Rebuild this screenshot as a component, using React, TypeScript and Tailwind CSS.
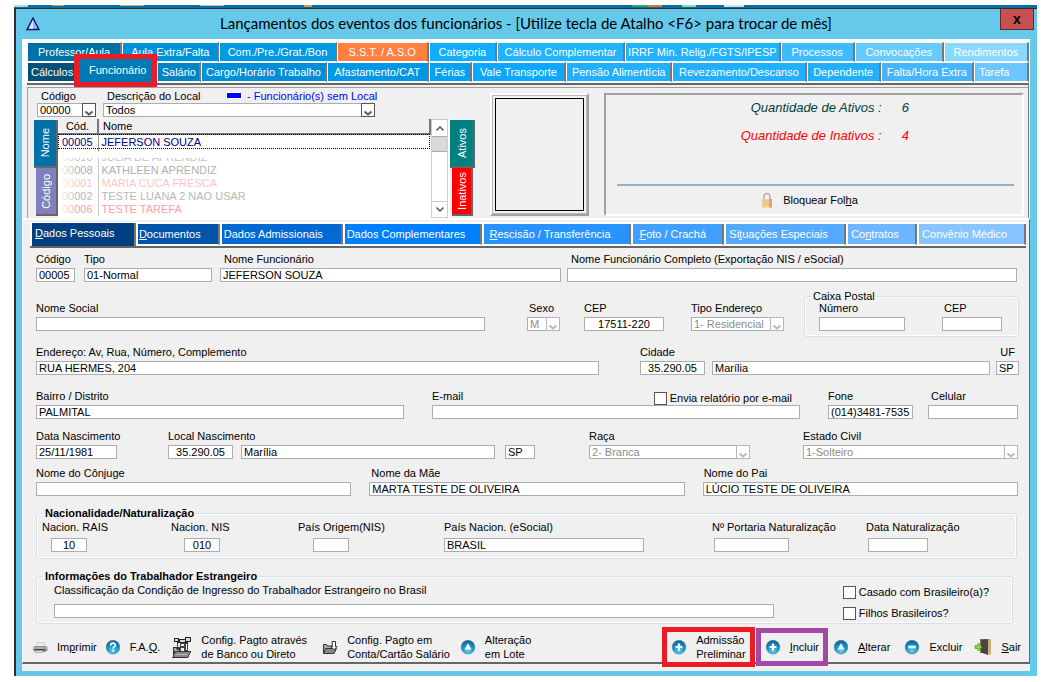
import React, { useId } from 'react';
import { clsx } from 'clsx';

const topTabs = [
    { label: 'Professor/Aula', color: 'bg-[#0070a6]' },
    { label: 'Aula Extra/Falta', color: 'bg-[#0093dc]' },
    { label: 'Com./Pre./Grat./Bon', color: 'bg-[#0099e3]' },
    { label: 'S.S.T. / A.S.O', color: 'bg-[#ff8040]' },
    { label: 'Categoria', color: 'bg-[#12adff]' },
    { label: 'Cálculo Complementar', color: 'bg-[#20b3ff]' },
    { label: 'IRRF Min. Relig./FGTS/IPESP', color: 'bg-[#20b3ff]' },
    { label: 'Processos', color: 'bg-[#3cbcff]' },
    { label: 'Convocações', color: 'bg-[#66ccff]' },
    { label: 'Rendimentos', color: 'bg-[#88d8ff]' },
];

const mainTabs = [
    { label: 'Cálculos', color: 'bg-[#005078]' },
    { label: 'Funcionário', color: 'bg-[#007ab5]', active: true },
    { label: 'Salário', color: 'bg-[#0084c4]' },
    { label: 'Cargo/Horário Trabalho', color: 'bg-[#008ed6]' },
    { label: 'Afastamento/CAT', color: 'bg-[#0098e4]' },
    { label: 'Férias', color: 'bg-[#00a2f6]' },
    { label: 'Vale Transporte', color: 'bg-[#0ca8ff]' },
    { label: 'Pensão Alimentícia', color: 'bg-[#20b0ff]' },
    { label: 'Revezamento/Descanso', color: 'bg-[#20b0ff]' },
    { label: 'Dependente', color: 'bg-[#20b0ff]' },
    { label: 'Falta/Hora Extra', color: 'bg-[#45b5ff]' },
    { label: 'Tarefa', color: 'bg-[#6cc6ff] pl-1 text-left' },
];

const detailTabs = [
    { before: '', key: 'D', after: 'ados Pessoais', color: 'bg-[#004080] pl-[3px]', active: true },
    { before: '', key: 'D', after: 'ocumentos', color: 'bg-[#0055aa] pl-px' },
    { before: 'Dados Admissionais', key: '', after: '', color: 'bg-[#0069d4] pl-0.5' },
    { before: 'Dados Complementares', key: '', after: '', color: 'bg-[#007fff] pl-0.5' },
    { before: '', key: 'R', after: 'escisão / Transferência', color: 'bg-[#2892ff] pl-1.5' },
    { before: '', key: 'F', after: 'oto / Crachá', color: 'bg-[#409fff] pl-1.5' },
    { before: 'Si', key: 't', after: 'uações Especiais', color: 'bg-[#55a9ff] pl-[3px]' },
    { before: 'Co', key: 'n', after: 'tratos', color: 'bg-[#6cb6ff] pl-[3px]' },
    { before: 'Convênio Médico', key: '', after: '', color: 'bg-[#88c4ff] pl-[3px]' },
];

const employees = [
    { code: '00010', name: 'JULIA DE APRENDIZ', color: 'text-[#c4c4c4]' },
    { code: '00008', name: 'KATHLEEN APRENDIZ', color: 'text-[#b0b0b0]' },
    { code: '00001', name: 'MARIA CUCA FRESCA', color: 'text-[#ffc4c4]' },
    { code: '00002', name: 'TESTE LUANA 2 NAO USAR', color: 'text-[#b8b8b8]' },
    { code: '00006', name: 'TESTE TAREFA', color: 'text-[#ffa0a0]' },
];

interface FieldProps {
    label: string;
    value?: string;
    className?: string;
    labelClass?: string;
    inputClass?: string;
}

const boxClass = 'block h-3.5 w-full min-w-0 rounded-none border border-[#abadb3] bg-white px-0.5 text-[11px] leading-3 outline-none';

const Field: React.FC<FieldProps> = ({ label, value = '', className, labelClass, inputClass }) => {
    const id = useId();
    return (
        <div className={clsx('flex min-w-0 flex-col gap-0.5', className)}>
            <label htmlFor={id} className={clsx('leading-[14px] whitespace-nowrap', labelClass)}>{label}</label>
            <input id={id} defaultValue={value} className={clsx(boxClass, inputClass)} />
        </div>
    );
};

const Box: React.FC<FieldProps> = ({ label, value = '', className }) => (
    <div className={clsx('min-w-0', className)}>
        <input aria-label={label} defaultValue={value} className={boxClass} />
    </div>
);

interface DropProps {
    id: string;
    value: string;
    muted?: boolean;
    className?: string;
}

const Drop: React.FC<DropProps> = ({ id, value, muted, className }) => (
    <div className={clsx('relative', className)}>
        <select
            id={id}
            disabled={muted}
            className={clsx(
                'block h-3.5 w-full appearance-none rounded-none border border-[#abadb3] bg-white px-0.5 text-[11px] leading-3 opacity-100',
                muted ? 'text-[#8c8c8c]' : 'text-black',
            )}
        >
            <option>{value}</option>
        </select>
        <svg
            viewBox="0 0 14 14"
            fill="none"
            stroke="currentColor"
            className={clsx('pointer-events-none absolute top-0 right-0 size-3.5', muted ? 'text-[#b4b6bc]' : 'text-[#555]')}
        >
            <rect x="0.5" y="0.5" width="13" height="13" fill="#fff" />
            <path d="M3.5 8.5 7 11.5 10.5 8.5" strokeWidth="2" />
        </svg>
    </div>
);

const SelectField: React.FC<{ label: string; value: string; className?: string; labelClass?: string }> = ({ label, value, className, labelClass }) => {
    const id = useId();
    return (
        <div className={clsx('flex flex-col gap-0.5', className)}>
            <label htmlFor={id} className={clsx('leading-[14px] whitespace-nowrap', labelClass)}>{label}</label>
            <Drop id={id} value={value} muted />
        </div>
    );
};

const Check: React.FC<{ label: string }> = ({ label }) => (
    <label className="flex items-center gap-[3px] leading-[14px] whitespace-nowrap">
        <input type="checkbox" className="size-[13px] appearance-none border border-[#555] bg-white checked:bg-[#0078d7]" />
        {label}
    </label>
);

const RoundIcon: React.FC<{ kind: 'plus' | 'minus' | 'up' | 'help' }> = ({ kind }) => {
    const id = useId();
    return (
        <svg viewBox="0 0 16 16" className="size-4 shrink-0">
            <defs>
                <radialGradient id={id} cx="50%" cy="80%" r="75%">
                    <stop offset="0" stopColor="#55d3f2" />
                    <stop offset="0.55" stopColor="#1a98cb" />
                    <stop offset="1" stopColor="#12608f" />
                </radialGradient>
            </defs>
            <circle cx="8" cy="8.5" r="7.3" fill="#c3ccd1" />
            <circle cx="8" cy="8" r="6.7" fill={`url(#${id})`} stroke="#3c86a8" strokeWidth="0.6" />
            {kind === 'plus' && <path d="M8 4.6v6.8M4.6 8h6.8" stroke="#fff" strokeWidth="2.2" />}
            {kind === 'minus' && <path d="M4.2 8h7.6" stroke="#fff" strokeWidth="2.6" />}
            {kind === 'up' && <path d="M8 4.2 11.4 10.4H4.6Z" fill="#fff" />}
            {kind === 'help' && (
                <>
                    <path d="M5.7 6.4C5.7 3.2 10.5 3.4 10.4 6.2 10.3 7.6 8.1 7.9 8.1 9.6" fill="none" stroke="#fff" strokeWidth="1.7" />
                    <rect x="7.2" y="10.7" width="1.8" height="1.8" fill="#fff" />
                </>
            )}
        </svg>
    );
};

const PrinterIcon = () => (
    <svg viewBox="0 0 16 16" className="size-4 shrink-0">
        <path d="M5 3.5h7l1 4H4Z" fill="#e9ecee" stroke="#b5b9bc" strokeWidth="0.6" />
        <path d="M3 7h11l1.5 1.5v3L13 13H3l-2-2V8.5Z" fill="#8b8f92" />
        <path d="M1 8h14v2H1Z" fill="#a9adb0" />
        <path d="M3 10h10v1.5H3Z" fill="#3e4346" />
        <path d="M2.5 11.5h9l-1 2h-7Z" fill="#dfe2e3" stroke="#777" strokeWidth="0.5" />
        <rect x="12.5" y="8.5" width="1.5" height="1" fill="#5bbf4a" />
    </svg>
);

// vault with its door open, resting on a folder
const BankIcon = () => (
    <svg viewBox="0 0 20 22" className="h-[22px] w-5 shrink-0" shapeRendering="crispEdges">
        <path d="M2 2h5v1h6V1h6v5h-3v2H5V6H2Z" fill="#222" />
        <path d="M3 3h3v2H3ZM14 2h4v3h-4ZM8 4h5v2H8Z" fill="#d8d8d8" />
        <path d="M5 7h11v9H5Z" fill="#444" />
        <path d="M6 7h2v4H6ZM9 8h3v2H9ZM9 12h3v4H9ZM14 8h1v6h-1Z" fill="#f2f2f2" />
        <path d="M1 11h3l1 2h2v8H1Z" fill="#aaa" stroke="#333" />
        <path d="M3 15h16l-3 6H1Z" fill="#888" stroke="#333" />
        <path d="M4 18h12" stroke="#b5b5b5" />
    </svg>
);

const FolderIcon = () => (
    <svg viewBox="0 0 16 16" className="size-4 shrink-0" stroke="#333" strokeWidth="1">
        <path d="M1.5 5.5h3l1 1.5h6v7h-10Z" fill="#aaa" />
        <path d="M3.5 9.5h11L12 14.5H1.5Z" fill="#888" />
        <path d="M10 2.5h3.5v5H15l-3 3.5-3-3.5h1.5Z" fill="#fff" />
    </svg>
);

const ExitIcon = () => (
    <svg viewBox="0 0 18 18" className="size-[18px] shrink-0">
        <path d="M6 1h10v14H6Z" fill="#8a6f50" />
        <path d="M7 2 14 1v16L7 14.5Z" fill="#4b463f" />
        <path d="M14 1h3v15.5h-3Z" fill="#c9ad7c" />
        <path d="M1 7.5h3V5l4 4-4 4v-2.5H1Z" fill="#8fce3c" stroke="#4d8d1b" strokeWidth="0.6" />
    </svg>
);

const LockIcon = () => (
    <svg viewBox="0 0 12 16" className="h-4 w-3">
        <path d="M3 8V4.5a3 3 0 0 1 6 0V8" fill="none" stroke="#b3b3b3" strokeWidth="1.6" />
        <rect x="1" y="7" width="10" height="8.5" fill="#f3cf95" />
        <rect x="8" y="7" width="3" height="8.5" fill="#d6a868" />
        <path d="M1 9.5h10M1 12h10" stroke="#e2b877" strokeWidth="0.7" />
    </svg>
);

const ToolButton: React.FC<{ icon: React.ReactNode; className?: string; children: React.ReactNode }> = ({ icon, className, children }) => (
    <button type="button" className={clsx('flex shrink-0 items-center gap-[9px] text-left leading-[14px] whitespace-nowrap', className)}>
        {icon}
        <span>{children}</span>
    </button>
);

const SideTab: React.FC<{ label: string; className: string }> = ({ label, className }) => (
    <button
        type="button"
        className={clsx('flex flex-1 items-center justify-center border-r-2 border-b-2 border-[#666] text-white', className)}
    >
        <span className="rotate-180 [writing-mode:vertical-rl]">{label}</span>
    </button>
);

const TabStrips = () => (
    <div className="bg-white pt-[3px] pr-px pl-[5px] text-white">
        <div className="grid grid-cols-[95fr_97fr_117fr_92fr_68fr_128fr_155fr_74fr_89fr_85fr]">
            {topTabs.map((tab) => (
                <button
                    key={tab.label}
                    type="button"
                    className={clsx('h-5 min-w-0 border-t border-r-2 border-b border-l border-white border-r-[#777] whitespace-nowrap', tab.color)}
                >
                    {tab.label}
                </button>
            ))}
        </div>
        <div className="grid grid-cols-[51fr_79fr_44fr_125fr_102fr_43fr_94fr_106fr_134fr_74fr_93fr_55fr]">
            {mainTabs.map((tab) =>
                tab.active ? (
                    <button key={tab.label} type="button" className={clsx('relative z-10 -mt-[3px] min-w-0 pb-0.5', tab.color)}>
                        {tab.label}
                        <span className="absolute -inset-y-[5px] right-0 -left-1 border-[5px] border-[#ed1c24]" />
                    </button>
                ) : (
                    <button
                        key={tab.label}
                        type="button"
                        className={clsx('h-5 min-w-0 border-t border-r-2 border-b border-l border-white border-r-[#777] whitespace-nowrap', tab.color)}
                    >
                        {tab.label}
                    </button>
                ),
            )}
        </div>
        <div className="mt-px h-0.5 bg-[#666]" />
    </div>
);

const EmployeeList = () => (
    <div className="flex h-[99px] items-stretch">
        <div className="flex w-6 flex-col pt-px pb-0.5">
            <SideTab label="Nome" className="bg-[#0070a8]" />
            <SideTab label="Código" className="ml-0.5 bg-[#8080c0]" />
        </div>
        <div className="relative min-w-0 flex-1 overflow-hidden bg-white">
            <table className="w-full table-fixed border-collapse text-left">
                <thead>
                    <tr className="h-[15px] bg-[#f0f0f0] leading-[13px]">
                        <th className="w-10 border-r-2 border-b-2 border-[#777] text-center font-normal">Cód.</th>
                        <th className="border-r-2 border-b-2 border-[#777] pl-1 font-normal">Nome</th>
                    </tr>
                </thead>
                <tbody>
                    <tr className="h-[15px] leading-[13px] text-[#000080] outline-1 -outline-offset-1 outline-black outline-dotted">
                        <td className="border-r border-[#999] pl-1">00005</td>
                        <td className="pl-[3px]">JEFERSON SOUZA</td>
                    </tr>
                    <tr className="h-0.5"><td className="border-r border-[#999]" /><td /></tr>
                    {employees.map((row) => (
                        <tr key={row.code} className={clsx('h-[13px] leading-[13px]', row.color)}>
                            <td className="border-r border-[#ccc] pl-1">{row.code}</td>
                            <td className="pl-[3px]">{row.name}</td>
                        </tr>
                    ))}
                </tbody>
            </table>
            <div className="absolute top-[33px] left-0 h-1.5 w-full bg-white" />
            <div className="absolute top-[33px] left-0 h-16 w-4 bg-gradient-to-r from-white to-white/20" />
        </div>
        <div className="flex w-[17px] flex-col border border-[#ccc] bg-white">
            <button type="button" aria-label="Subir" className="flex h-4 items-center justify-center">
                <svg viewBox="0 0 8 5" className="h-[5px] w-2" fill="none" stroke="#555" strokeWidth="1.5"><path d="M0.5 4.5 4 1 7.5 4.5" /></svg>
            </button>
            <div className="h-4 border-y border-[#aaa] bg-[#dadada]" />
            <div className="flex-1" />
            <button type="button" aria-label="Descer" className="flex h-4 items-center justify-center border-t border-[#ccc]">
                <svg viewBox="0 0 8 5" className="h-[5px] w-2" fill="none" stroke="#555" strokeWidth="1.5"><path d="M0.5 0.5 4 4 7.5 0.5" /></svg>
            </button>
        </div>
        <div className="flex w-[27px] flex-col border-l-2 border-white pt-px pb-0.5">
            <SideTab label="Ativos" className="bg-[#008080]" />
            <SideTab label="Inativos" className="mr-0.5 ml-0.5 bg-[#ff0000]" />
        </div>
    </div>
);

const Summary = () => (
    <div className="flex h-[131px] border-t border-l border-[#a0a0a0] pr-1">
        <div className="flex w-[447px] shrink-0 flex-col pl-1.5">
            <div className="flex h-[15px] items-center">
                <label htmlFor="localCodigo" className="w-[66px] pl-[7px]">Código</label>
                <label htmlFor="localDescricao" className="w-[126px] pl-[7px] whitespace-nowrap">Descrição do Local</label>
                <span className="mr-[5px] h-[7px] w-4 shrink-0 border border-white bg-[#0000ff]" />
                <span className="whitespace-nowrap text-[#0000ff]">- Funcionário(s) sem Local</span>
            </div>
            <div className="flex gap-[7px] pb-0.5 pl-[3px]">
                <Drop id="localCodigo" value="00000" className="w-[59px]" />
                <Drop id="localDescricao" value="Todos" className="w-[272px]" />
            </div>
            <EmployeeList />
        </div>
        <div className="mt-[5px] mr-[15px] mb-0.5 ml-[15px] w-[99px] shrink-0 border-2 border-white border-r-[#a0a0a0] border-b-[#a0a0a0] p-[3px] outline-1 -outline-offset-3 outline-[#b8b8b8]">
            <div className="h-full border border-black" />
        </div>
        <div className="mt-[5px] mb-0.5 flex min-w-0 flex-1 flex-col border-2 border-white border-t-[#a0a0a0] border-l-[#a0a0a0] pr-2 pl-[11px]">
            <dl className="mt-1 grid grid-cols-[264fr_112fr] gap-x-5 gap-y-2.5 text-[13px] leading-[18px] italic">
                <dt className="text-right text-[#004040]">Quantidade de Ativos :</dt>
                <dd className="text-[#004040]">6</dd>
                <dt className="text-right text-[#ff0000]">Quantidade de Inativos :</dt>
                <dd className="text-[#ff0000]">4</dd>
            </dl>
            <hr className="mt-auto border-t-2 border-[#93adc4]" />
            <button type="button" className="mx-auto mt-1.5 mb-1.5 flex items-center gap-2.5 pr-3">
                <LockIcon />
                <span>Bloquear Fol<u>h</u>a</span>
            </button>
        </div>
    </div>
);

const DetailTabs = () => (
    <div className="mr-[3px] ml-[7px] border-b-2 border-[#666] bg-white pt-0.5 text-white">
        <div className="grid grid-cols-[106fr_84fr_123fr_139fr_150fr_93fr_122fr_71fr_109fr]">
            {detailTabs.map((tab) => (
                <button
                    key={tab.before + tab.key + tab.after}
                    type="button"
                    className={clsx(
                        'min-w-0 border-r-2 border-l-2 border-white border-r-[#777] text-left whitespace-nowrap',
                        tab.active ? '-mt-px h-[23px] pb-1' : 'h-[21px] border-b border-b-white',
                        tab.color,
                    )}
                >
                    {tab.before}
                    {tab.key && <u>{tab.key}</u>}
                    {tab.after}
                </button>
            ))}
        </div>
    </div>
);

const PersonalData = () => (
    <form className="flex flex-col pt-1 pr-2.5 pl-[13px]">
        <div className="flex pr-0.5">
            <Field label="Código" value="00005" className="w-[39px]" />
            <Field label="Tipo" value="01-Normal" className="ml-[9px] w-32" />
            <Field label="Nome Funcionário" value="JEFERSON SOUZA" className="ml-2 flex-[341]" labelClass="pl-1" />
            <Field label="Nome Funcionário Completo (Exportação NIS / eSocial)" className="ml-1.5 flex-[450]" labelClass="pl-1" />
        </div>

        <div className="flex h-[55px] items-start pt-[19px]">
            <Field label="Nome Social" className="flex-1" />
            <SelectField label="Sexo" value="M" className="ml-[42px] w-[33px]" labelClass="pl-0.5" />
            <Field label="CEP" value="17511-220" className="ml-6 w-20" inputClass="text-center" />
            <SelectField label="Tipo Endereço" value="1- Residencial" className="ml-[27px] w-[93px]" />
            <fieldset className="-mt-3 ml-5 flex h-12 w-[215px] justify-between rounded-[3px] border border-[#d5dfe5] pr-4 pl-3.5 shadow-[inset_0_0_0_1px_#fff]">
                <legend className="-ml-2 px-0.5 leading-[14px]">Caixa Postal</legend>
                <Field label="Número" className="-mt-0.5 w-[86px]" />
                <Field label="CEP" className="-mt-0.5 w-[60px]" labelClass="pl-0.5" />
            </fieldset>
        </div>

        <div className="mt-2 flex items-end">
            <Field label="Endereço: Av, Rua, Número, Complemento" value="RUA HERMES, 204" className="flex-[563]" />
            <Field label="Cidade" value="35.290.05" className="ml-[41px] w-[65px]" inputClass="text-center" />
            <Box label="Nome da cidade" value="Marília" className="ml-[7px] flex-[278]" />
            <Field label="UF" value="SP" className="ml-1.5 w-[23px]" labelClass="pr-1 text-right" />
        </div>

        <div className="mt-3.5 flex items-end">
            <Field label="Bairro / Distrito" value="PALMITAL" className="flex-1" />
            <div className="relative ml-7 flex-1">
                <Field label="E-mail" />
                <div className="absolute top-0.5 right-2">
                    <Check label="Envia relatório por e-mail" />
                </div>
            </div>
            <Field label="Fone" value="(014)3481-7535" className="ml-7 w-[85px]" />
            <Field label="Celular" className="mr-px ml-[15px] w-[90px]" labelClass="pl-[3px]" />
        </div>

        <div className="mt-2.5 flex items-end">
            <Field label="Data Nascimento" value="25/11/1981" className="w-[81px]" />
            <Field label="Local Nascimento" value="35.290.05" className="ml-[51px] w-[65px]" inputClass="text-center" />
            <Box label="Cidade de nascimento" value="Marília" className="ml-2 flex-1" />
            <Box label="UF de nascimento" value="SP" className="ml-2.5 w-[30px]" />
            <SelectField label="Raça" value="2- Branca" className="ml-[54px] w-[161px]" />
            <SelectField label="Estado Civil" value="1-Solteiro" className="mr-px ml-[53px] w-[215px]" />
        </div>

        <div className="mt-[7px] grid grid-cols-3 gap-x-[18px] pr-px">
            <Field label="Nome do Cônjuge" />
            <Field label="Nome da Mãe" value="MARTA TESTE DE OLIVEIRA" labelClass="pl-0.5" />
            <Field label="Nome do Pai" value="LÚCIO TESTE DE OLIVEIRA" labelClass="pl-px" />
        </div>

        <fieldset className="mt-2.5 mr-0.5 flex h-[53px] items-start rounded-[3px] border border-[#d5dfe5] px-[5px] shadow-[inset_0_0_0_1px_#fff]">
            <legend className="ml-px px-0.5 leading-[14px] font-bold">Nacionalidade/Naturalização</legend>
            <Field label="Nacion. RAIS" value="10" className="w-[129px]" inputClass="mt-0.5 ml-[9px] max-w-9 text-center" />
            <Field label="Nacion. NIS" value="010" className="w-[127px]" inputClass="mt-0.5 ml-[13px] max-w-9 text-center" />
            <Field label="País Origem(NIS)" className="w-[146px]" inputClass="mt-0.5 ml-[15px] max-w-9" />
            <Field label="País Nacion. (eSocial)" value="BRASIL" className="flex-1" inputClass="mt-0.5 max-w-[200px]" />
            <Field label="Nº Portaria Naturalização" className="w-[154px]" inputClass="mt-0.5 ml-0.5 max-w-[75px]" />
            <Field label="Data Naturalização" className="w-[145px]" inputClass="mt-0.5 ml-0.5 max-w-[60px]" />
        </fieldset>

        <fieldset className="mt-2.5 mr-1.5 flex h-[55px] items-start rounded-[3px] border border-[#d5dfe5] pr-[23px] pl-[17px] shadow-[inset_0_0_0_1px_#fff]">
            <legend className="-ml-[11px] px-0.5 leading-[14px] font-bold">Informações do Trabalhador Estrangeiro</legend>
            <Field
                label="Classificação da Condição de Ingresso do Trabalhador Estrangeiro no Brasil"
                className="mr-[69px] flex-1"
                inputClass="mt-[5px]"
            />
            <div className="flex flex-col gap-[7px] pt-0.5">
                <Check label="Casado com Brasileiro(a)?" />
                <Check label="Filhos Brasileiros?" />
            </div>
        </fieldset>
    </form>
);

const Toolbar = () => (
    <div className="mt-[7px] flex h-[31px] items-center pr-2 pl-[9px]">
        <ToolButton icon={<PrinterIcon />}>Im<u>p</u>rimir</ToolButton>
        <ToolButton icon={<RoundIcon kind="help" />} className="ml-2">F.A.<u>Q</u>.</ToolButton>
        <ToolButton icon={<BankIcon />} className="ml-3">Config. Pagto através<br />de Banco ou Direto</ToolButton>
        <ToolButton icon={<FolderIcon />} className="ml-[15px]">Config. Pagto em<br />Conta/Cartão Salário</ToolButton>
        <ToolButton icon={<RoundIcon kind="up" />} className="ml-2.5">Alteração<br />em Lote</ToolButton>
        <ToolButton icon={<RoundIcon kind="plus" />} className="mr-px ml-auto h-10 border-[5px] border-[#ed1c24] px-1">
            Admissão<br />Preliminar
        </ToolButton>
        <ToolButton icon={<RoundIcon kind="plus" />} className="h-[38px] border-[5px] border-[#a349a4] px-1"><u>I</u>ncluir</ToolButton>
        <ToolButton icon={<RoundIcon kind="up" />} className="ml-[5px]">
            <u>A</u>lterar
        </ToolButton>
        <ToolButton icon={<RoundIcon kind="minus" />} className="ml-3.5">Excluir</ToolButton>
        <ToolButton icon={<ExitIcon />} className="ml-3">
            <u>S</u>air
        </ToolButton>
    </div>
);

export default function App() {
    return (
        <div className="bg-white pt-[5px] pr-1 pb-1.5 pl-3.5 font-['Liberation_Sans',Arial,sans-serif] text-[11px] leading-[14px] text-black">
            <div className="flex h-[3px] bg-[#0a6ea5]">
                <span className="h-0.5 w-3.5 bg-[#b9d3df]" />
                <span className="ml-6 h-px w-3 bg-[#c9a062]" />
                <span className="ml-14 h-px w-6 bg-[#b9b98a]" />
                <span className="ml-14 h-px w-6 bg-[#a9c4cf]" />
                <span className="ml-20 h-0.5 w-2 bg-[#e39a3d]" />
                <span className="ml-80 h-0.5 w-4 bg-[#2ba36a]" />
                <span className="h-0.5 w-3.5 bg-[#e8743a]" />
                <span className="ml-5 h-0.5 w-3.5 bg-[#8fd6c4]" />
                <span className="ml-7 h-0.5 w-5 bg-[#cfe0e6]" />
            </div>
            <div className="border-t border-l-2 border-[#2b2f33] bg-[#66c9ea] pr-[7px] pb-[5px] pl-1.5">
                <header className="-mr-1 flex h-[30px] items-start">
                    <svg viewBox="0 0 14 14" className="mt-2 ml-1 size-3.5">
                        <path d="M7 1 13 12.5H1Z" fill="#8fb4f5" stroke="#10106e" strokeWidth="1.4" />
                        <path d="M7 3v9L3 11.5Z" fill="#dce9ff" />
                    </svg>
                    <h1 className="flex-1 pt-0.5 pl-3 text-center font-['Lato','Open_Sans',sans-serif] text-[15px] leading-6 whitespace-nowrap">
                        Lançamentos dos eventos dos funcionários - [Utilize tecla de Atalho &lt;F6&gt; para trocar de mês]
                    </h1>
                    <button
                        type="button"
                        aria-label="Fechar"
                        className="flex h-[21px] w-[34px] items-center justify-center border border-t-0 border-[#5e2b2b] bg-[#c75050] text-sm font-bold"
                    >
                        x
                    </button>
                </header>
                <main className="bg-[#f0f0f0] pb-[7px]">
                    <TabStrips />
                    <div className="mr-px border-r border-[#777] pt-0.5 pl-[5px]">
                        <Summary />
                    </div>
                    <section className="border-t-2 border-r border-b-2 border-l border-t-white border-r-[#666] border-b-[#666] border-l-white pt-0.5">
                        <DetailTabs />
                        <PersonalData />
                        <Toolbar />
                    </section>
                </main>
            </div>
        </div>
    );
}
